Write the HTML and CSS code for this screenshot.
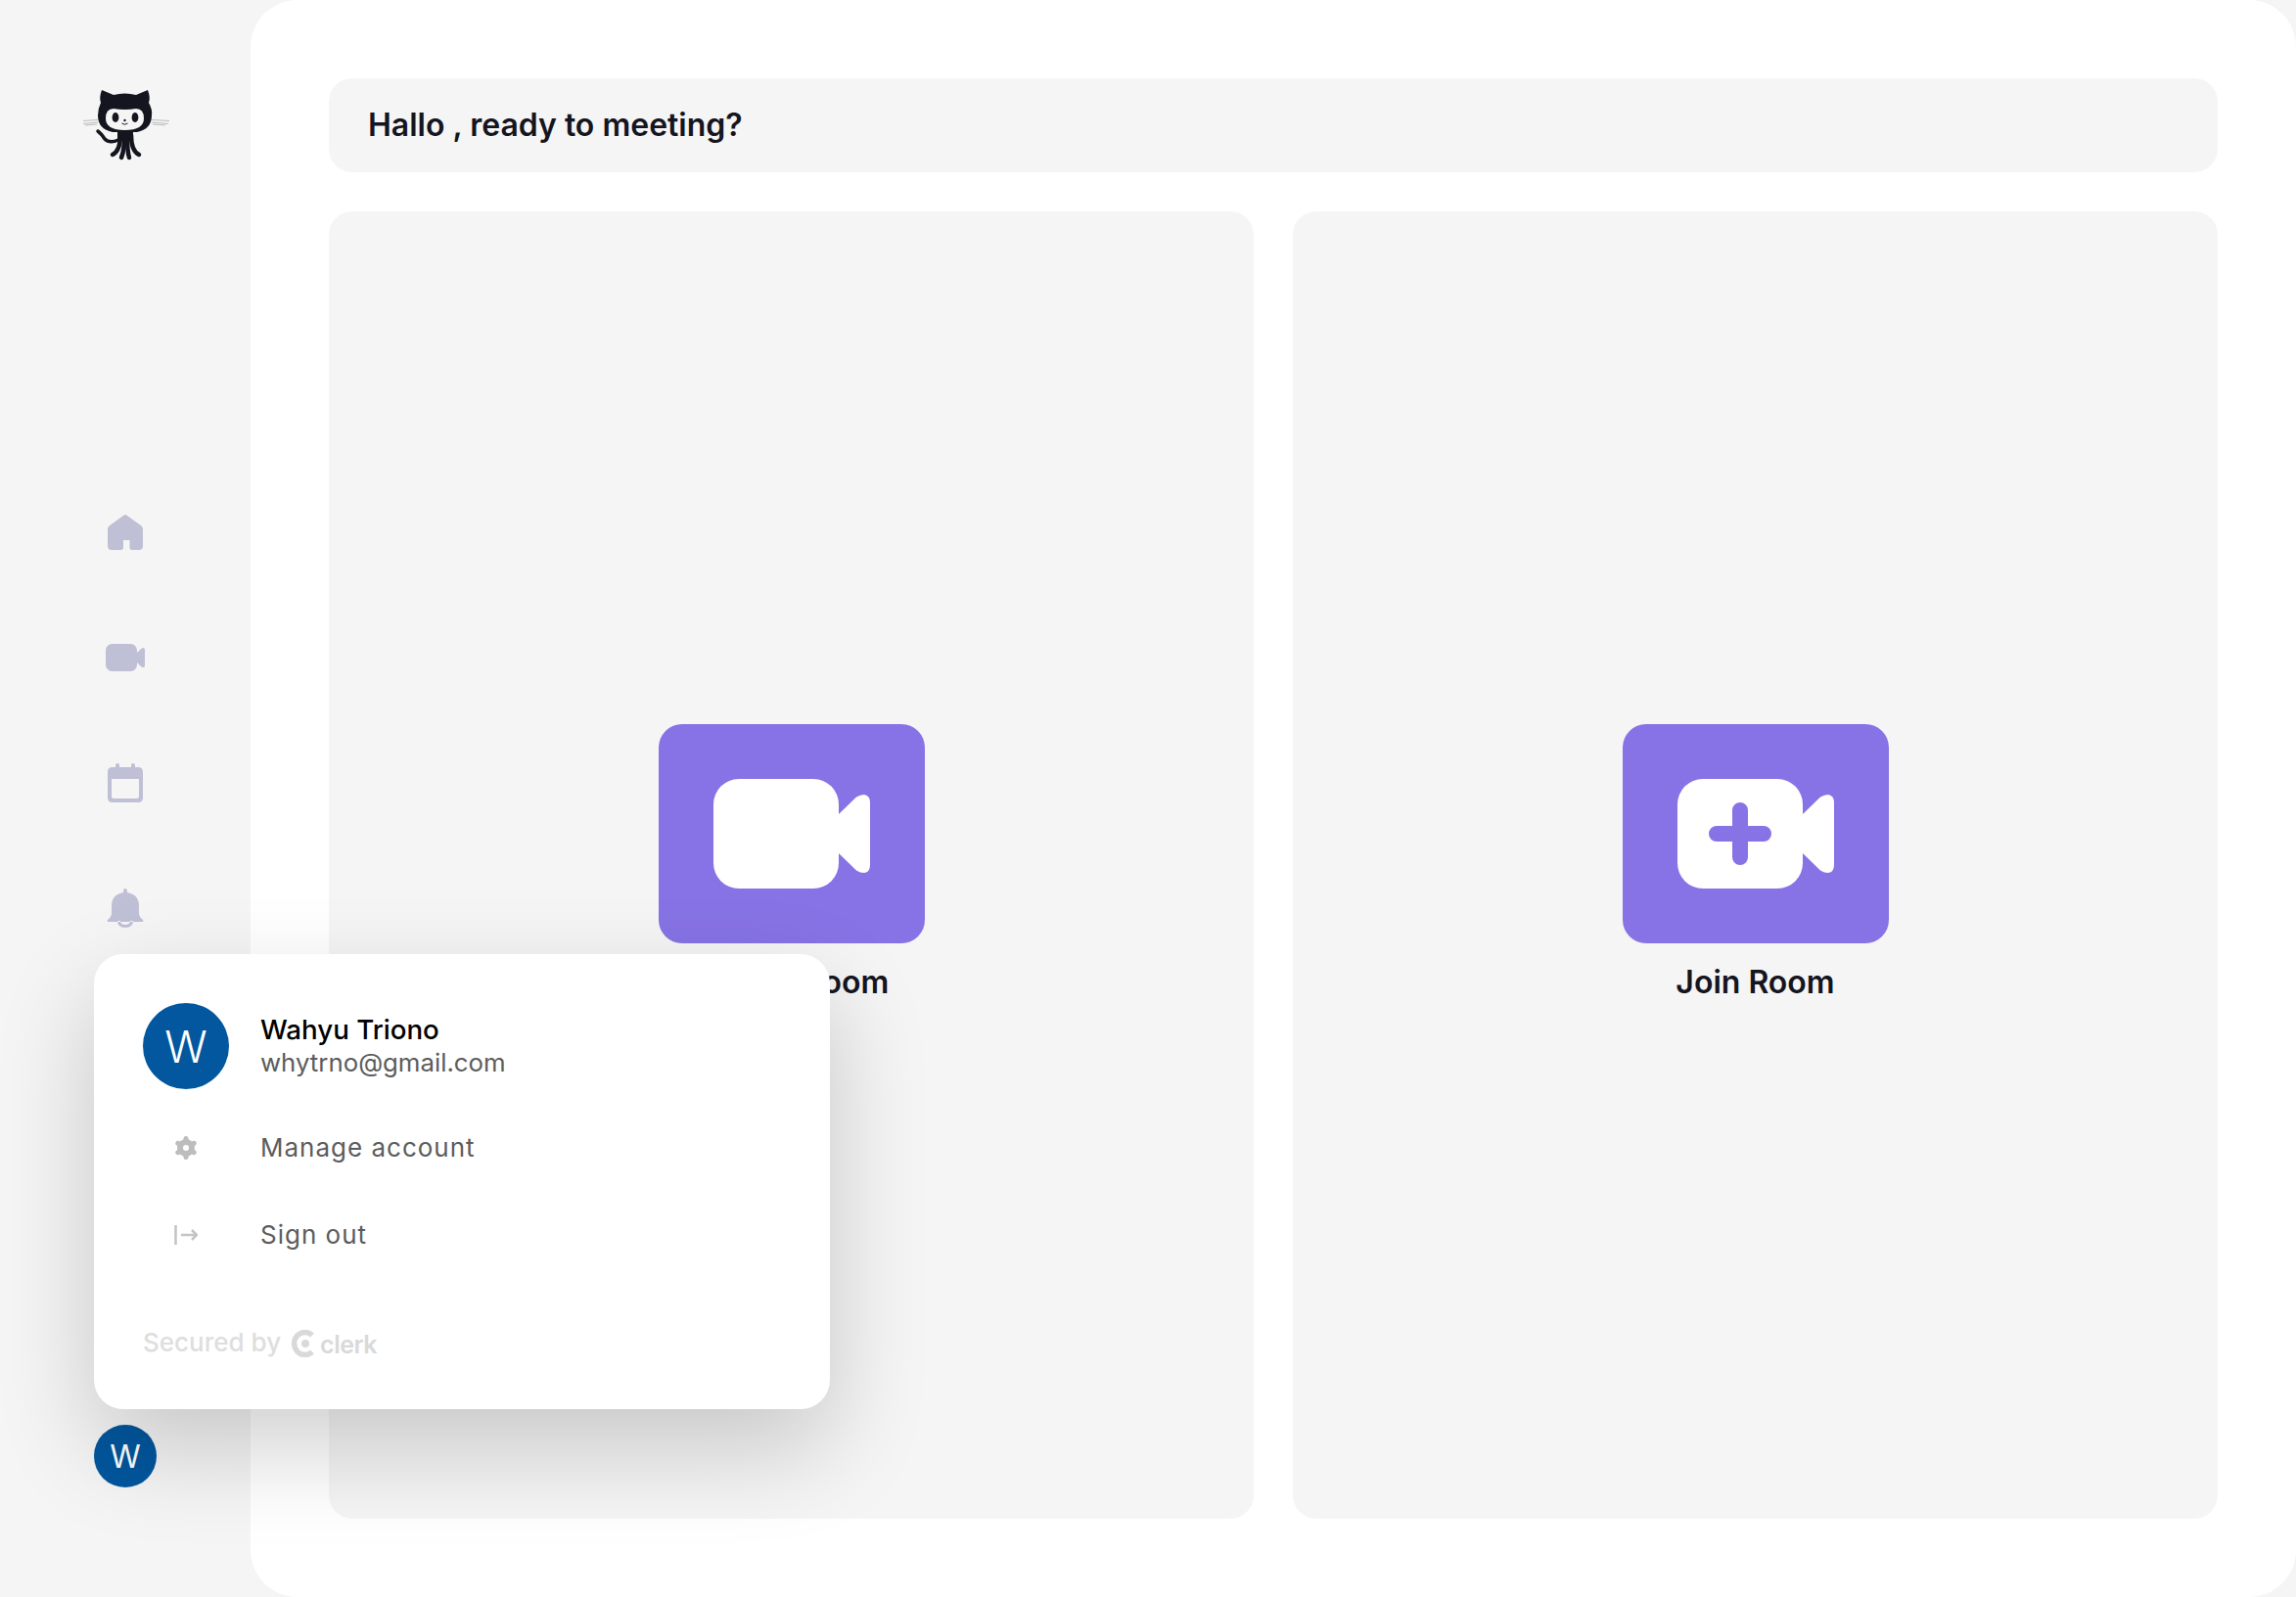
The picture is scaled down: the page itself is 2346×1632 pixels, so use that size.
FILE: index.html
```html
<!DOCTYPE html>
<html lang="en">
<head>
<meta charset="utf-8">
<title>Meeting</title>
<link rel="stylesheet" href="styles.css">
</head>
<body>
<div class="app">
  <aside class="sidebar">
    <svg class="logo" viewBox="0 0 96 80" aria-label="Logo">
      <g class="whisker">
        <path d="M5 35.500 L20 34.500 M5 38.500 L20 37 M7 40 L19 39"/>
        <path d="M75 34.500 L93 35.500 M75 37 L92 38.500 M76 39 L89 40"/>
      </g>
      <path class="cat" d="M24 4 L36 9 Q47.500 6 59 9 L71 4 Q74 12 72 17 Q76 24 75 30 Q75 44 60 47 L35 47 Q20 44 20 30 Q20 23 23 17 Q21 12 24 4Z"/>
      <path class="face" d="M36 23 Q47.500 25 59 23 Q67 23 67 33 Q67 45 47.500 45 Q28 45 28 33 Q28 23 36 23Z"/>
      <ellipse class="cat" cx="38" cy="32" rx="3.400" ry="5"/>
      <ellipse class="cat" cx="58" cy="32" rx="3.400" ry="5"/>
      <circle class="cat" cx="47.500" cy="35" r="1.200"/>
      <path class="mouth" d="M44.500 38 Q47.500 40.500 50.500 38"/>
      <rect class="cat" x="40" y="45" width="16" height="11"/>
      <g class="tent">
        <path d="M43 50 Q43 66 35 70"/>
        <path d="M47 52 Q47 66 44 73"/>
        <path d="M50 52 Q50 66 52 73"/>
        <path d="M54 50 Q54 66 62 70"/>
      </g>
      <path class="tail" d="M41 55 Q32 59 27 54 Q24 49 20 46"/>
    </svg>

    <nav class="nav">
      <svg class="nav-icon" viewBox="0 0 48 48"><path d="M24 6 Q25 6 26 7 L40 17 Q42 18.500 42 21 L42 38 Q42 42 38 42 L31 42 Q28.500 42 28.500 39.500 L28.500 32 L22 32 L22 39.500 Q22 42 19.500 42 L10 42 Q6 42 6 38 L6 21 Q6 18.500 8 17 L22 7 Q23 6 24 6Z"/></svg>
      <svg class="nav-icon" viewBox="0 0 48 48"><g transform="translate(4 10) scale(.25)"><use href="#cam"/></g></svg>
      <svg class="nav-icon" viewBox="0 0 48 48"><path fill-rule="evenodd" d="M16 4 Q18 4 18 6 L18 8 L30 8 L30 6 Q30 4 32 4 Q34 4 34 6 L34 8 L37 8 Q42 8 42 13 L42 39 Q42 44 37 44 L11 44 Q6 44 6 39 L6 13 Q6 8 11 8 L14 8 L14 6 Q14 4 16 4Z M10 20 L10 38 Q10 40 12 40 L36 40 Q38 40 38 38 L38 20Z"/></svg>
      <svg class="nav-icon" viewBox="0 0 48 48"><path fill-rule="evenodd" d="M24 4 Q26 4 26 7 L26 8 Q38 10 38 22 L38 29 Q38 33 42 36 Q43 38 41 38 L7 38 Q5 38 6 36 Q10 33 10 29 L10 22 Q10 10 22 8 L22 7 Q22 4 24 4Z M16 37 L19 37 Q19 41 24 41 Q29 41 29 37 L32 37 Q32 44 24 44 Q16 44 16 37Z"/></svg>
    </nav>

    <div class="avatar avatar-small">W</div>
  </aside>

  <main class="main">
    <header class="greeting">Hallo , ready to meeting?</header>
    <section class="panels">
      <div class="panel">
        <div class="tile">
          <svg class="tile-icon" viewBox="0 0 160 112"><use href="#cam"/></svg>
        </div>
        <div class="panel-label">Create Room</div>
      </div>
      <div class="panel">
        <div class="tile">
          <svg class="tile-icon" viewBox="0 0 160 112"><use href="#cam"/><path class="plus" d="M40 56 H88 M64 32 V80"/></svg>
        </div>
        <div class="panel-label">Join Room</div>
      </div>
    </section>
  </main>

  <div class="user-card">
    <div class="user-head">
      <div class="avatar avatar-large">W</div>
      <div class="user-meta">
        <div class="user-name">Wahyu Triono</div>
        <div class="user-mail">whytrno@gmail.com</div>
      </div>
    </div>
    <div class="menu-row">
      <span class="menu-icon">
        <svg viewBox="0 0 24 24" class="gear"><circle cx="12" cy="12" r="6"/><path d="M12 2.500 V5 M12 19 V21.500 M3.800 7.250 L6 8.500 M18 15.500 L20.200 16.750 M3.800 16.750 L6 15.500 M18 8.500 L20.200 7.250"/></svg>
      </span>
      <span class="menu-text">Manage account</span>
    </div>
    <div class="menu-row">
      <span class="menu-icon">
        <svg viewBox="0 0 24 24" class="signout"><path d="M1.500 2 V22 M7 12 H23 M18 7 L23 12 L18 17"/></svg>
      </span>
      <span class="menu-text">Sign out</span>
    </div>
    <div class="secured">
      <span>Secured by</span>
      <svg class="clerk-mark" viewBox="0 0 24 28"><path class="clerk-arc" d="M21 5.500 A11 11.500 0 1 0 21 22.500"/><circle cx="14" cy="14" r="4"/></svg>
      <span class="clerk-word">clerk</span>
    </div>
  </div>
</div>

<svg class="defs" width="0" height="0" aria-hidden="true">
  <defs>
    <g id="cam">
      <rect width="128" height="112" rx="26"/>
      <path d="M128 36 L146 18.500 Q150 16 154 16 Q160 17 160 24 L160 88 Q160 95 154 96 Q150 96 146 93.500 L128 76Z"/>
    </g>
  </defs>
</svg>
</body>
</html>
```

FILE: styles.css
```css
* { box-sizing: border-box; }

html, body {
  margin: 0;
  height: 100%;
}

body {
  background: #f5f5f5;
  font-family: Inter, "Liberation Sans", sans-serif;
  color: #15151f;
  overflow: hidden;
}

.app {
  position: relative;
  display: flex;
  width: 2346px;
  height: 1632px;
}

.defs { position: absolute; }

/* Sidebar */
.sidebar {
  width: 256px;
  flex: none;
  display: flex;
  flex-direction: column;
  align-items: center;
  padding: 80px 0 112px;
}

.logo {
  width: 96px;
  height: 80px;
  margin-top: 8px;
  flex: none;
}

.cat { fill: #15151f; }
.face { fill: #f5f5f5; }
.mouth { fill: none; stroke: #15151f; stroke-width: 1; }
.whisker path { fill: none; stroke: #adadad; stroke-width: 0.8; }
.tent path { fill: none; stroke: #15151f; stroke-width: 4.5; stroke-linecap: round; }
.tail { fill: none; stroke: #15151f; stroke-width: 3.5; stroke-linecap: round; }

.nav {
  margin-top: 352px;
  display: flex;
  flex-direction: column;
  gap: 80px;
}

.nav-icon {
  display: block;
  width: 48px;
  height: 48px;
  fill: #bfbfd6;
}

.avatar {
  border-radius: 50%;
  background: #02579e;
  color: #fff;
  display: flex;
  align-items: center;
  justify-content: center;
  flex: none;
}

.avatar-small {
  width: 64px;
  height: 64px;
  margin-top: auto;
  font-size: 32px;
  font-weight: 400;
}

.avatar-large {
  width: 88px;
  height: 88px;
  font-size: 45px;
  font-weight: 350;
}

/* Main */
.main {
  flex: 1;
  background: #fff;
  border-radius: 48px;
  padding: 80px;
  display: flex;
  flex-direction: column;
  gap: 40px;
}

.greeting {
  height: 96px;
  flex: none;
  background: #f5f5f5;
  border-radius: 24px;
  padding: 0 40px 2px;
  display: flex;
  align-items: center;
  font-size: 32px;
  font-weight: 600;
}

.panels {
  flex: 1;
  display: grid;
  grid-template-columns: 1fr 1fr;
  gap: 40px;
}

.panel {
  background: #f5f5f5;
  border-radius: 24px;
  display: flex;
  flex-direction: column;
  align-items: center;
  justify-content: center;
  gap: 16px;
}

.tile {
  width: 272px;
  height: 224px;
  background: #8773e5;
  border-radius: 24px;
  display: flex;
  align-items: center;
  justify-content: center;
}

.tile-icon {
  width: 160px;
  height: 112px;
  fill: #fff;
}

.plus {
  fill: none;
  stroke: #8773e5;
  stroke-width: 16;
  stroke-linecap: round;
}

.panel-label {
  font-size: 32px;
  line-height: 48px;
  font-weight: 600;
}

/* Popover */
.user-card {
  position: absolute;
  left: 96px;
  top: 975px;
  width: 752px;
  height: 465px;
  background: #fff;
  border-radius: 30px;
  padding: 50px 50px 0;
  box-shadow: 0 40px 100px rgba(0, 0, 0, 0.19);
}

.user-head {
  display: flex;
  align-items: center;
  gap: 32px;
  margin-bottom: 15px;
}

.user-meta {
  display: flex;
  flex-direction: column;
}

.user-name {
  font-size: 27.7px;
  line-height: 34px;
  font-weight: 500;
  color: #000;
}

.user-mail {
  font-size: 25.8px;
  line-height: 34px;
  color: #5c5c5c;
}

.menu-row {
  display: flex;
  align-items: center;
  gap: 32px;
  height: 89px;
}

.menu-icon {
  width: 88px;
  display: flex;
  justify-content: center;
  flex: none;
}

.menu-icon svg {
  display: block;
  width: 24px;
  height: 24px;
}

.menu-text {
  font-size: 26px;
  letter-spacing: 1px;
  color: #5c5c5c;
}

.gear path { stroke-width: 5; stroke-linecap: round; }
.gear { fill: none; stroke: #bdbdbd; stroke-width: 6; }
.signout { fill: none; stroke: #c4c4c4; stroke-width: 2.500; }

.secured {
  margin-top: 47px;
  height: 36px;
  display: flex;
  align-items: center;
  font-size: 26px;
  font-weight: 500;
  color: #dedede;
}

.clerk-mark {
  width: 24px;
  height: 28px;
  margin-left: 11px;
  margin-top: 4px;
  fill: #d9d9d9;
  flex: none;
}

.clerk-arc {
  fill: none;
  stroke: #d9d9d9;
  stroke-width: 5.500;
}

.clerk-word {
  margin-left: 5px;
  padding-top: 6px;
  font-size: 25px;
  font-weight: 600;
  letter-spacing: -0.5px;
  color: #d9d9d9;
}
```
